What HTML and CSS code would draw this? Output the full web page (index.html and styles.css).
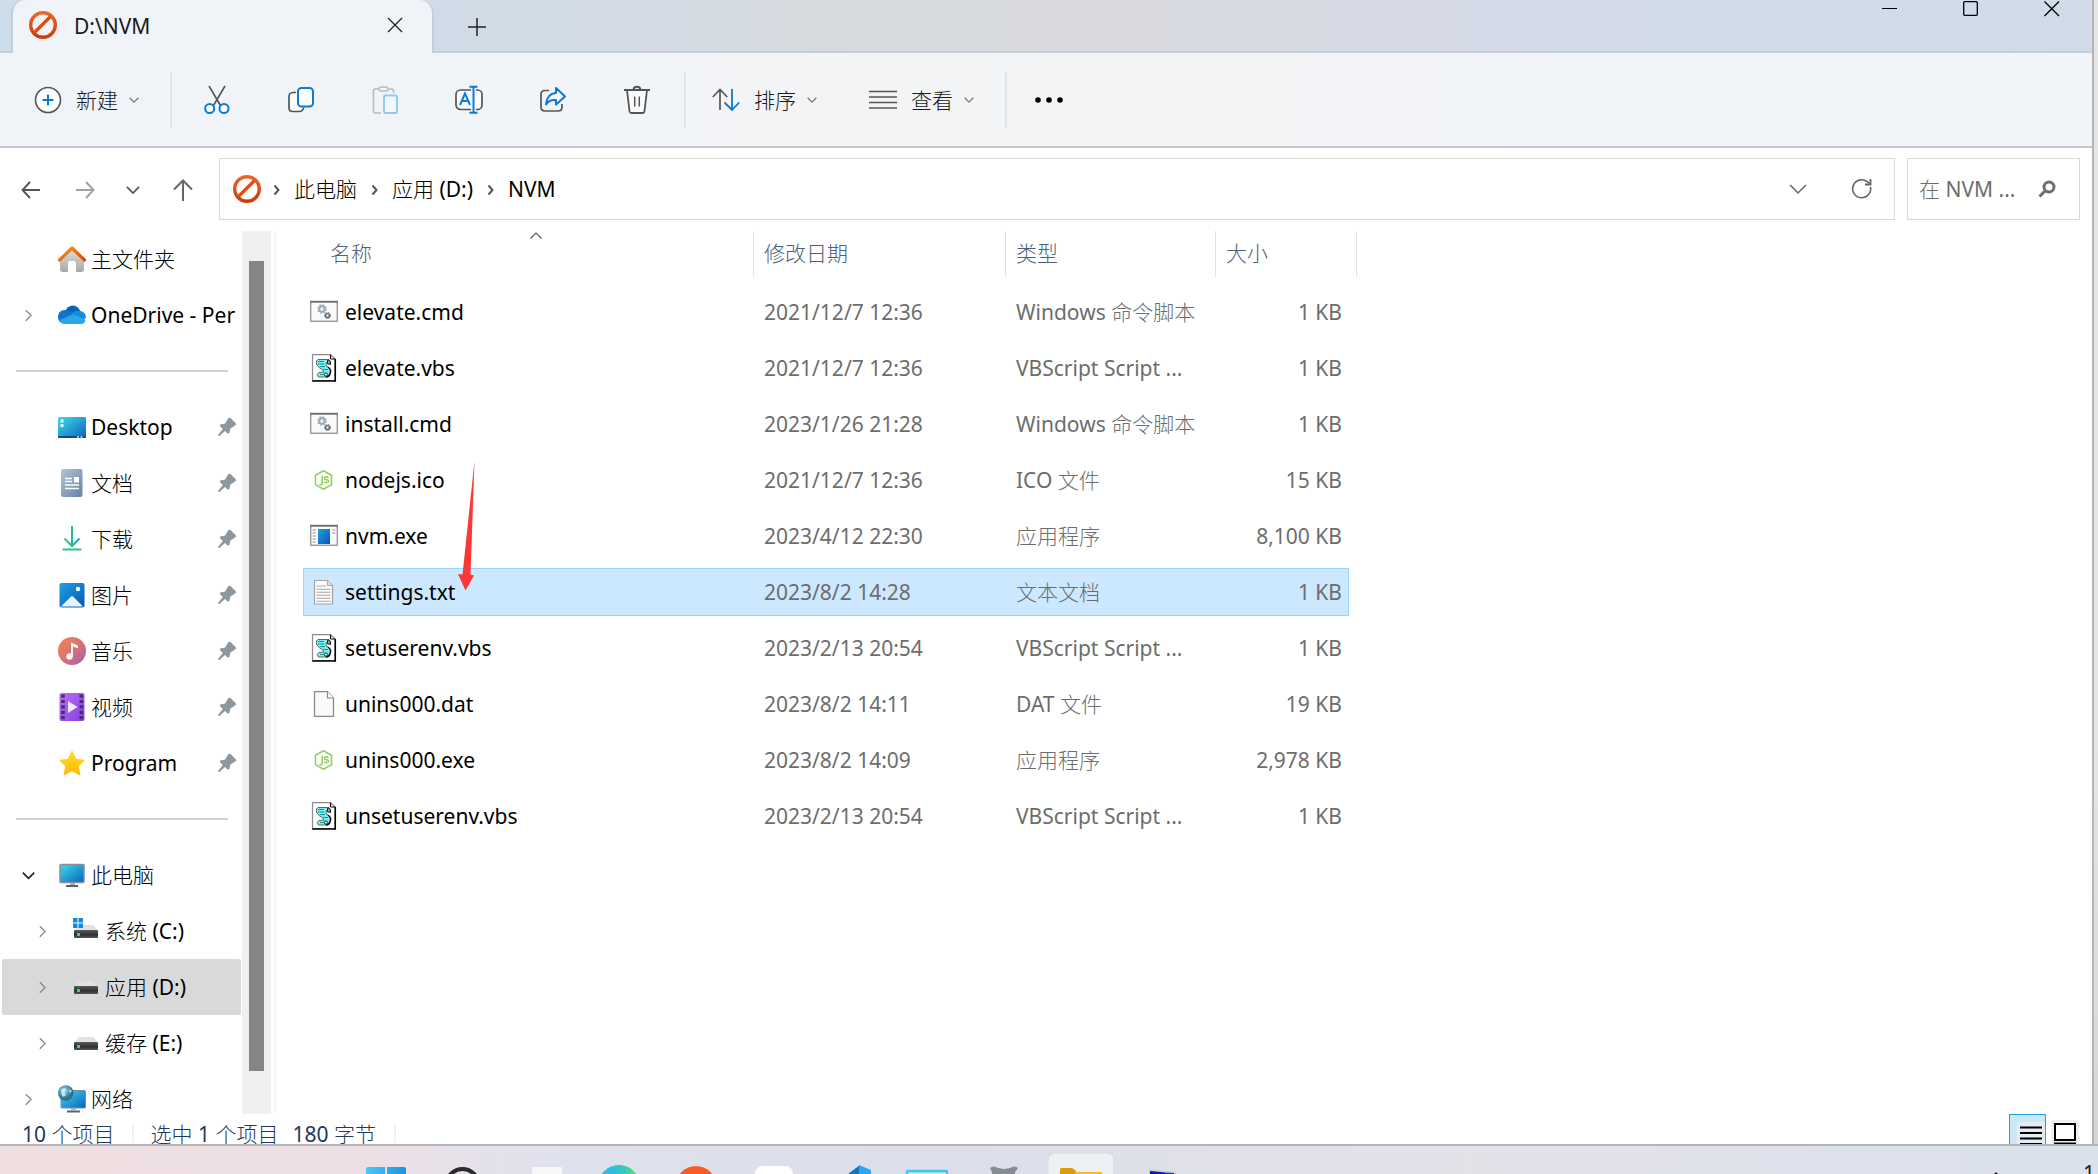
FILE: index.html
```html
<!DOCTYPE html>
<html lang="zh-CN">
<head>
<meta charset="utf-8">
<title>D:\NVM</title>
<link rel="stylesheet" href="styles.css">
</head>
<body>
<svg class="defs" aria-hidden="true">
  <defs>
    <linearGradient id="g-forbid" x1="0" y1="0" x2="0" y2="1"><stop offset="0" stop-color="#e8672c"/><stop offset="1" stop-color="#d23a0a"/></linearGradient>
    <linearGradient id="g-roof" x1="0" y1="0" x2="1" y2="1"><stop offset="0" stop-color="#f79a12"/><stop offset="1" stop-color="#d9480f"/></linearGradient>
    <linearGradient id="g-wall" x1="0" y1="0" x2="0" y2="1"><stop offset="0" stop-color="#dedede"/><stop offset="1" stop-color="#a9a9a9"/></linearGradient>
    <linearGradient id="g-screen" x1="0" y1="0" x2="1" y2="1"><stop offset="0" stop-color="#3fdbe6"/><stop offset="1" stop-color="#0a63c0"/></linearGradient>
    <linearGradient id="g-doc" x1="0" y1="0" x2="1" y2="1"><stop offset="0" stop-color="#b4c5d8"/><stop offset="1" stop-color="#6482a6"/></linearGradient>
    <linearGradient id="g-down" x1="0" y1="0" x2="1" y2="0"><stop offset="0" stop-color="#3cc98e"/><stop offset="1" stop-color="#17a9a9"/></linearGradient>
    <linearGradient id="g-pic" x1="0" y1="0" x2="1" y2="1"><stop offset="0" stop-color="#1fa0ea"/><stop offset="1" stop-color="#0758ac"/></linearGradient>
    <linearGradient id="g-music" x1="0" y1="0" x2="1" y2="1"><stop offset="0" stop-color="#f5894a"/><stop offset=".6" stop-color="#cf6f80"/><stop offset="1" stop-color="#9a5fc4"/></linearGradient>
    <linearGradient id="g-video" x1="0" y1="0" x2="1" y2="1"><stop offset="0" stop-color="#b970f5"/><stop offset="1" stop-color="#8440e4"/></linearGradient>
    <linearGradient id="g-star" x1="0" y1="0" x2="0" y2="1"><stop offset="0" stop-color="#ffe11a"/><stop offset="1" stop-color="#ffb60f"/></linearGradient>
    <linearGradient id="g-drive" x1="0" y1="0" x2="0" y2="1"><stop offset="0" stop-color="#5a5a5a"/><stop offset=".6" stop-color="#303030"/><stop offset="1" stop-color="#555"/></linearGradient>
    <linearGradient id="g-win" x1="0" y1="0" x2="1" y2="0"><stop offset="0" stop-color="#4cc8f8"/><stop offset="1" stop-color="#1b92de"/></linearGradient>
    <linearGradient id="g-edge" x1="0" y1="0" x2="1" y2="0"><stop offset="0" stop-color="#35b5f0"/><stop offset=".5" stop-color="#2cc3d2"/><stop offset="1" stop-color="#5fe068"/></linearGradient>
    <radialGradient id="g-globe" cx=".4" cy=".35"><stop offset="0" stop-color="#c2e6f2"/><stop offset=".5" stop-color="#58a9cb"/><stop offset="1" stop-color="#2f6f92"/></radialGradient>

    <symbol id="forbid" viewBox="0 0 28 28"><circle cx="14" cy="14" r="12.3" fill="none" stroke="url(#g-forbid)" stroke-width="3.4"/><path d="M5.500 21.500 21.500 5.500" stroke="#dc4c16" stroke-width="3.2"/></symbol>
    <symbol id="chev-down" viewBox="0 0 16 16"><path d="M1 4.500 8 11.500 15 4.500" fill="none" stroke="currentColor" stroke-width="var(--sw,2)"/></symbol>
    <symbol id="chev-right" viewBox="0 0 8 14"><path d="M1 1 7 7 1 13" fill="none" stroke="currentColor" stroke-width="1.600"/></symbol>
    <symbol id="crumb" viewBox="0 0 8 12"><path d="M1.500 1.500 5.500 6 1.500 10.500" fill="none" stroke="#555" stroke-width="2"/></symbol>
    <symbol id="pin" viewBox="0 0 20 20"><path d="M11 1.500 Q12.500 0 14 1.500 L18.600 6 Q20 7.500 18 8.500 L13.500 11.500 12.500 15.500 Q11.500 17.500 10 16 L8 14 3 18.500 Q1 19.500 1 18 L5.800 12 3.500 9.800 Q2 8 4 7.200 L8.200 6.500Z" fill="#8d989e"/></symbol>
    <symbol id="drive" viewBox="0 0 28 28"><path d="M7 8H21.500L26 15H2Z" fill="#dfe1e6"/><rect x="2" y="13" width="24" height="8" rx="1" fill="url(#g-drive)"/><rect x="5" y="16" width="3" height="3" fill="#3ddb4a"/></symbol>
    <symbol id="monitor" viewBox="0 0 28 28"><rect x="2" y="3.500" width="24" height="18" rx="1" fill="url(#g-screen)" stroke="#85919b" stroke-width="1.500"/><path d="M12 22h5v2h-5z" fill="#a9b4bc"/><path d="M8 24h12v2H8z" fill="#59636b"/></symbol>

    <symbol id="f-cmd" viewBox="0 0 28 28"><rect x=".7" y="3.700" width="26.600" height="19.600" fill="#fafafa" stroke="#999" stroke-width="1.400"/><path d="M0 3.700H28" stroke="#6d6d6d" stroke-width="1.800"/><circle cx="12" cy="11" r="2.800" fill="#e6eaee" stroke="#9aa6b0" stroke-width="1.800"/><circle cx="12" cy="11" r="4.200" fill="none" stroke="#9aa6b0" stroke-width="1.200" stroke-dasharray="1.800 1.500"/><circle cx="17.500" cy="17.500" r="1.900" fill="#fff" stroke="#5d656b" stroke-width="1.400"/><circle cx="17.500" cy="17.500" r="3" fill="none" stroke="#5d656b" stroke-width="1" stroke-dasharray="1.300 1.050"/></symbol>
    <symbol id="f-vbs" viewBox="0 0 28 28"><path d="M2.500.700H20.500L25 5V26.500H2.500Z" fill="#fff" stroke="#8b8b8b" stroke-width="1.200"/><path d="M25.300 5V27H2.200" fill="none" stroke="#000" stroke-width="1.500"/><path d="M20.500.700V5H25" fill="none" stroke="#000"/><path d="M8 5.500H18Q20 7 16 9.500 15 11 18 13 22 16 20 20 19 23 16 23H8.500Q6 20 9 18.500 L14 18 Q13 15.500 9 13.500 5 10 6.500 7Z" fill="#7df0f0" stroke="#555" stroke-width=".9"/><path d="M8 7.500H14M8 10H14M10 12.500H15M13 15.500H18M10 20.500H15" stroke="#0c9a9a" stroke-width="1.200"/><path d="M18 5.500Q22 7 20.500 10.500L17 9.500Z" fill="#999" stroke="#111"/><path d="M18 13Q22 16 20 20 19 23 16 23" stroke="#111" fill="none" stroke-width="1.500"/><circle cx="16" cy="20.500" r="1.600" fill="#fff" stroke="#111" stroke-width=".9"/></symbol>
    <symbol id="f-node" viewBox="0 0 28 28"><path d="M13.500 4.700 21.500 9.200V18.600L13.500 23.200 5.500 18.600V9.200Z" fill="none" stroke="#93cf63" stroke-width="1.600" stroke-linejoin="round"/><path d="M12.300 10V17.300Q12.300 19.200 9.500 18.400M18.500 11.500Q14.500 10 14.500 12.300 14.500 13.600 16.500 13.800 18.800 14.200 18.500 15.500 17.800 17.400 14.200 16" fill="none" stroke="#93cf63" stroke-width="1.600"/></symbol>
    <symbol id="f-exe" viewBox="0 0 28 28"><rect x=".7" y="3.700" width="26.600" height="19.600" fill="#fafafa" stroke="#999" stroke-width="1.400"/><path d="M0 3.700H28" stroke="#6d6d6d" stroke-width="1.800"/><rect x="8" y="7" width="12" height="15" fill="url(#g-pic)"/><path d="M2.500 8H6M2.500 11H6M2.500 14H6M2.500 17H6M2.500 20H6M22 8H25.500M22 11H25.500" stroke="#9b9b9b" stroke-width="1.200"/></symbol>
    <symbol id="f-txt" viewBox="0 0 28 28"><path d="M4.500 2.500H17.500L22.500 7.500V26H4.500Z" fill="#fbfbfb" stroke="#a3a3a3" stroke-width="1.200"/><path d="M17.500 2.500V7.500H22.500" fill="#ddd" stroke="#aaa"/><path d="M6.500 8H16M6.500 11.200H20.500M6.500 14.200H20.500M6.500 17.200H20.500M6.500 20.200H20.500M6.500 23.200H20.500" stroke="#a9a9a9" stroke-width="1.100"/></symbol>
    <symbol id="f-dat" viewBox="0 0 28 28"><path d="M4.500 1.600H17.500L23.500 8V26.400H4.500Z" fill="#fafafa" stroke="#8a8a8a" stroke-width="1.300"/><path d="M17.500 1.600V8H23.500" fill="#fff" stroke="#8a8a8a" stroke-width="1.200"/></symbol>
  </defs>
</svg>

<div class="desktop">
<main class="window">
  <header class="titlebar">
    <div class="tab">
      <svg class="i28"><use href="#forbid"/></svg>
      <span class="tab-title">D:\NVM</span>
      <button class="tab-close" aria-label="关闭标签页"><svg width="16" height="16" viewBox="0 0 16 16"><path d="M1 1 15 15M15 1 1 15" stroke="#222" stroke-width="1.300"/></svg></button>
    </div>
    <button class="tab-new" aria-label="新标签页"><svg width="18" height="18" viewBox="0 0 18 18"><path d="M9 0V18M0 9H18" stroke="#222" stroke-width="1.500"/></svg></button>
    <div class="captions">
      <button aria-label="最小化"><svg width="16" height="16" viewBox="0 0 16 16"><path d="M0 7.500H15" stroke="#000"/></svg></button>
      <button aria-label="最大化"><svg width="16" height="16" viewBox="0 0 16 16"><rect x=".700" y=".700" width="13.600" height="13.600" rx="1" fill="none" stroke="#000" stroke-width="1.300"/></svg></button>
      <button aria-label="关闭"><svg width="16" height="16" viewBox="0 0 16 16"><path d="M.5.5 15 15M15 .5.5 15" stroke="#000" stroke-width="1.300"/></svg></button>
    </div>
  </header>

  <div class="toolbar">
    <button class="menu-btn"><svg class="i28" viewBox="0 0 28 28"><circle cx="14" cy="14" r="12.500" fill="#fbfcfd" stroke="#555" stroke-width="1.600"/><path d="M14 8.500V19.500M8.500 14H19.500" stroke="#0a7ad8" stroke-width="2"/></svg><span>新建</span><svg class="chev"><use href="#chev-down"/></svg></button>
    <i class="divider"></i>
    <div class="tools">
      <button aria-label="剪切"><svg class="i28" viewBox="0 0 28 28"><path d="M6 0 17.500 19.500M22 0 10.500 19.500" stroke="#555" stroke-width="1.600"/><circle cx="6.700" cy="22.500" r="4.500" fill="#fff" stroke="#0a7ad8" stroke-width="2"/><circle cx="21" cy="22.500" r="4.500" fill="#fff" stroke="#0a7ad8" stroke-width="2"/></svg></button>
      <button aria-label="复制"><svg class="i28" viewBox="0 0 28 28"><path d="M9 6.500H6Q2 7 2 10V22Q2 25.500 6 25.500H12Q16 25.500 16.500 21.500" fill="#fbfcfd" stroke="#555" stroke-width="1.700"/><rect x="11" y="2" width="15" height="18.500" rx="3.500" fill="#fbfcfd" stroke="#0a7ad8" stroke-width="2"/></svg></button>
      <button aria-label="粘贴" disabled><svg class="i28" viewBox="0 0 28 28"><path d="M8 3H4.500Q2.500 3 2.500 5V25Q2.500 27 4.500 27H10M18 3H20.500Q22.500 3 22.500 5V7" fill="none" stroke="#b8babd" stroke-width="1.600"/><rect x="8" y="1" width="9" height="4" rx="2" fill="#f0f4f9" stroke="#b8babd" stroke-width="1.500"/><rect x="13" y="9.500" width="13" height="17.500" rx="1.500" fill="#f3f8fc" stroke="#93c8ec" stroke-width="1.900"/></svg></button>
      <button aria-label="重命名"><svg class="i28" viewBox="0 0 28 28"><rect x="1" y="4" width="26" height="19.500" rx="4.500" fill="#fbfcfd" stroke="#555" stroke-width="1.700"/><path d="M18.500 2V26" stroke="#f0f4f9" stroke-width="5"/><path d="M18.500 0V27M14.500 .800H22.500M14.500 26.800H22.500M5 19 10 7.500 15 19M6.800 15H13.200" fill="none" stroke="#0a7ad8" stroke-width="1.900"/></svg></button>
      <button aria-label="共享"><svg class="i28" viewBox="0 0 28 28"><path d="M10 4.500H6Q2 4.500 2 8.500V21Q2 25 6 25H19Q23 25 23 21V18" fill="none" stroke="#555" stroke-width="1.700"/><path d="M17 2 26 10.500 17 18.500V14Q10 13.500 7 18.500 8 7.500 17 7Z" fill="#fbfcfd" stroke="#0a7ad8" stroke-width="2" stroke-linejoin="round"/></svg></button>
      <button aria-label="删除"><svg class="i28" viewBox="0 0 28 28"><path d="M4 4 6.500 25Q6.700 27 8.500 27H19.500Q21.300 27 21.500 25L24 4" fill="#fbfcfd" stroke="#555" stroke-width="1.800"/><path d="M1 4H27M10.500 3.500Q11 .800 14 .800T17.500 3.500" fill="none" stroke="#555" stroke-width="1.900"/><path d="M11.700 10.500V20.500M16.300 10.500V20.500" stroke="#555" stroke-width="1.500"/></svg></button>
    </div>
    <i class="divider"></i>
    <button class="menu-btn"><svg class="i28" viewBox="0 0 28 28"><path d="M8 24V4M.8 11 8 3.500 15.200 11" fill="none" stroke="#555" stroke-width="1.700"/><path d="M20 3V24M12.500 16.500 20 24 27.200 16.500" fill="none" stroke="#0a7ad8" stroke-width="1.800"/></svg><span>排序</span><svg class="chev"><use href="#chev-down"/></svg></button>
    <button class="menu-btn"><svg class="i28" viewBox="0 0 28 28"><path d="M0 5.500H28M0 11H28M0 16.500H28M0 22H28" stroke="#555" stroke-width="1.700"/></svg><span>查看</span><svg class="chev"><use href="#chev-down"/></svg></button>
    <i class="divider"></i>
    <button class="more" aria-label="更多"><svg class="i28" viewBox="0 0 28 28"><circle cx="3" cy="14" r="2.800"/><circle cx="14" cy="14" r="2.800"/><circle cx="25" cy="14" r="2.800"/></svg></button>
  </div>

  <div class="navbar">
    <div class="nav-buttons">
      <button aria-label="后退"><svg width="20" height="20" viewBox="0 0 20 20"><path d="M19 10H2M9 2 1.500 10 9 18" fill="none" stroke="#555" stroke-width="1.900"/></svg></button>
      <button aria-label="前进"><svg width="20" height="20" viewBox="0 0 20 20"><path d="M1 10H18M11 2 18.500 10 11 18" fill="none" stroke="#a0a0a0" stroke-width="1.900"/></svg></button>
      <button class="narrow" aria-label="最近位置"><svg width="14" height="14"><use href="#chev-down"/></svg></button>
      <button class="wide" aria-label="上移"><svg width="22" height="22" viewBox="0 0 22 22"><path d="M11 22V2M2 10.500 11 1.500 20 10.500" fill="none" stroke="#666" stroke-width="2"/></svg></button>
    </div>
    <nav class="address" aria-label="地址">
      <svg class="i28"><use href="#forbid"/></svg>
      <svg class="crumb"><use href="#crumb"/></svg><a href="#">此电脑</a>
      <svg class="crumb"><use href="#crumb"/></svg><a href="#">应用 (D:)</a>
      <svg class="crumb"><use href="#crumb"/></svg><a href="#">NVM</a>
      <span class="spacer"></span>
      <button class="addr-btn thin" aria-label="历史"><svg width="18" height="18"><use href="#chev-down"/></svg></button>
      <button class="addr-btn" aria-label="刷新"><svg width="20" height="20" viewBox="0 0 20 20"><path d="M18.500 8A9 9 0 1 1 15 2.500L18 5" fill="none" stroke="#666" stroke-width="1.600"/><path d="M18.500 0V5.500H13" fill="none" stroke="#666" stroke-width="1.800"/></svg></button>
    </nav>
    <label class="search"><input type="text" placeholder="在 NVM ..." aria-label="搜索"><svg width="18" height="18" viewBox="0 0 18 18"><circle cx="11" cy="7" r="5" fill="none" stroke="#6d6d6d" stroke-width="3"/><path d="M7.500 10.500 1.500 16.500" stroke="#6d6d6d" stroke-width="3"/></svg></label>
  </div>

  <div class="body">
    <aside class="sidebar">
      <ul class="tree">
        <li><svg class="i28" viewBox="0 0 28 28"><path d="M2 14 14 3.500 26 14V24Q26 27 23 27H18V18Q18 16 16 16H12Q10 16 10 18V27H5Q2 27 2 24Z" fill="url(#g-wall)"/><path d="M1.500 15 14 3 26.500 15" fill="none" stroke="url(#g-roof)" stroke-width="3.200" stroke-linecap="round" stroke-linejoin="round"/></svg><a href="#">主文件夹</a></li>
        <li><svg class="arrow"><use href="#chev-right"/></svg><svg class="i28" viewBox="0 0 28 28"><path d="M7 11Q9 4.500 15 4.500 20 5 22.500 10.500L15 17Z" fill="#0563b5"/><path d="M6 9Q10 8.500 13 11L21 16 10 22H5Q0 21.500 0 16 0 10 6 9Z" fill="#0f74d0"/><path d="M20 9.500Q28 10 28 17L20 20 13 13.500Q16 9.500 20 9.500Z" fill="#1689e0"/><path d="M1.500 19 15 13.500 27.500 18.500Q27 23 22.500 23H6Q3 23 1.500 19Z" fill="#28a8ea"/></svg><a href="#">OneDrive - Per</a></li>
        <li class="rule"><hr></li>
        <li><svg class="i28" viewBox="0 0 28 28"><rect y="4" width="28" height="21" rx="1.500" fill="url(#g-screen)"/><path d="M0 23H28V24Q28 25 27 25H1Q0 25 0 24Z" fill="#0b4f86"/><path d="M2.500 6.500h3v3h-3zM2.500 11h3v3h-3z" fill="#e8ffff"/><path d="M19 24h2M22.500 24h2" stroke="#d0e6f5" stroke-width="1.500"/></svg><a href="#">Desktop</a><svg class="pin"><use href="#pin"/></svg></li>
        <li><svg class="i28" viewBox="0 0 28 28"><rect x="3" width="21.500" height="28" rx="2" fill="url(#g-doc)"/><path d="M7 9.500H14M7 12.500H14M7 16H21M7 19.500H21" stroke="#fff" stroke-width="1.600"/><path d="M16 8h5v5.500h-5z" fill="#fff"/></svg><a href="#">文档</a><svg class="pin"><use href="#pin"/></svg></li>
        <li><svg class="i28" viewBox="0 0 28 28"><path d="M6.500 13.500 14 21 21.500 13.500" fill="none" stroke="url(#g-down)" stroke-width="2"/><path d="M13 1h2v20h-2z" fill="#27b79c"/><path d="M4.500 24.500H23.500" stroke="#35c08e" stroke-width="2.200"/></svg><a href="#">下载</a><svg class="pin"><use href="#pin"/></svg></li>
        <li><svg class="i28" viewBox="0 0 28 28"><rect x="1.500" y="2" width="25" height="24.500" rx="2" fill="url(#g-pic)"/><path d="M3 25.500 13 15.500Q14 14.800 15 15.500L25 25.500Z" fill="#eaf4fd"/><circle cx="20" cy="8" r="2.200" fill="#fff"/></svg><a href="#">图片</a><svg class="pin"><use href="#pin"/></svg></li>
        <li><svg class="i28" viewBox="0 0 28 28"><circle cx="14" cy="14" r="14" fill="url(#g-music)"/><circle cx="11.500" cy="19.500" r="3.200" fill="#f6f6f6"/><path d="M13 5.500 20 8.500V11.500L15 9.500V19.500H13Z" fill="#f6f6f6"/></svg><a href="#">音乐</a><svg class="pin"><use href="#pin"/></svg></li>
        <li><svg class="i28" viewBox="0 0 28 28"><rect x="1.500" width="25" height="28" rx="2" fill="url(#g-video)"/><path d="M5 1.500V28M23.300 1.500V28" stroke="#4a2b7a" stroke-width="3.600" stroke-dasharray="3.200 2.200"/><path d="M10 8 19.500 14 10 20Z" fill="#efe9f8"/></svg><a href="#">视频</a><svg class="pin"><use href="#pin"/></svg></li>
        <li><svg class="i28" viewBox="0 0 28 28"><path d="M14 2 17.800 10.300 26.300 11.300 20.200 17.300 22 26 14 21.700 6 26 7.800 17.300 1.700 11.300 10.200 10.300Z" fill="url(#g-star)" stroke="url(#g-star)" stroke-linejoin="round"/></svg><a href="#">Program</a><svg class="pin"><use href="#pin"/></svg></li>
        <li class="rule"><hr></li>
        <li class="open"><svg class="arrow down"><use href="#chev-down"/></svg><svg class="i28"><use href="#monitor"/></svg><a href="#">此电脑</a></li>
        <li class="sub"><svg class="arrow"><use href="#chev-right"/></svg><svg class="i28" viewBox="0 0 28 28"><use href="#drive"/><path d="M1 1h4.500v4.500H1zM6.500 1H11v4.500H6.500zM1 6.500h4.500V11H1zM6.500 6.500H11V11H6.500z" fill="#128bdc"/></svg><a href="#">系统 (C:)</a></li>
        <li class="sub current"><svg class="arrow"><use href="#chev-right"/></svg><svg class="i28"><use href="#drive"/></svg><a href="#">应用 (D:)</a></li>
        <li class="sub"><svg class="arrow"><use href="#chev-right"/></svg><svg class="i28"><use href="#drive"/></svg><a href="#">缓存 (E:)</a></li>
        <li><svg class="arrow"><use href="#chev-right"/></svg><svg class="i28" viewBox="0 0 28 28"><rect x="3" y="5.500" width="24.500" height="17.500" rx="1" fill="url(#g-screen)" stroke="#6f93a8"/><path d="M13 23h5v2h-5z" fill="#a9b4bc"/><path d="M9 25.500h13v2H9z" fill="#59636b"/><circle cx="7.800" cy="8" r="7.800" fill="url(#g-globe)"/><path d="M3 5Q6 2 8 4L6 7 8 10 5 12Q3 9 3 5ZM11 4 14 6 12 8Z" fill="#e3f2f5" opacity=".8"/></svg><a href="#">网络</a></li>
      </ul>
      <div class="scroll-track"><div class="scroll-thumb"></div></div>
    </aside>

    <section class="files">
      <table>
        <colgroup><col class="c-name"><col class="c-date"><col class="c-type"><col class="c-size"><col class="c-end"></colgroup>
        <thead><tr>
          <th scope="col"><div class="head name-head">名称<svg class="sort" viewBox="0 0 12 7"><path d="M.5 6.500 6 1 11.500 6.500" fill="none" stroke="#555" stroke-width="1.200"/></svg></div></th>
          <th scope="col"><div class="head">修改日期</div></th>
          <th scope="col"><div class="head">类型</div></th>
          <th scope="col" colspan="2"><div class="head">大小</div></th>
        </tr></thead>
        <tbody>
          <tr><td><svg class="i28"><use href="#f-cmd"/></svg>elevate.cmd</td><td>2021/12/7 12:36</td><td>Windows 命令脚本</td><td>1 KB</td></tr>
          <tr><td><svg class="i28"><use href="#f-vbs"/></svg>elevate.vbs</td><td>2021/12/7 12:36</td><td>VBScript Script ...</td><td>1 KB</td></tr>
          <tr><td><svg class="i28"><use href="#f-cmd"/></svg>install.cmd</td><td>2023/1/26 21:28</td><td>Windows 命令脚本</td><td>1 KB</td></tr>
          <tr><td><svg class="i28"><use href="#f-node"/></svg>nodejs.ico</td><td>2021/12/7 12:36</td><td>ICO 文件</td><td>15 KB</td></tr>
          <tr><td><svg class="i28"><use href="#f-exe"/></svg>nvm.exe</td><td>2023/4/12 22:30</td><td>应用程序</td><td>8,100 KB</td></tr>
          <tr class="selected"><td><svg class="i28"><use href="#f-txt"/></svg>settings.txt</td><td>2023/8/2 14:28</td><td>文本文档</td><td>1 KB</td></tr>
          <tr><td><svg class="i28"><use href="#f-vbs"/></svg>setuserenv.vbs</td><td>2023/2/13 20:54</td><td>VBScript Script ...</td><td>1 KB</td></tr>
          <tr><td><svg class="i28"><use href="#f-dat"/></svg>unins000.dat</td><td>2023/8/2 14:11</td><td>DAT 文件</td><td>19 KB</td></tr>
          <tr><td><svg class="i28"><use href="#f-node"/></svg>unins000.exe</td><td>2023/8/2 14:09</td><td>应用程序</td><td>2,978 KB</td></tr>
          <tr><td><svg class="i28"><use href="#f-vbs"/></svg>unsetuserenv.vbs</td><td>2023/2/13 20:54</td><td>VBScript Script ...</td><td>1 KB</td></tr>
        </tbody>
      </table>
      <svg class="pointer" viewBox="0 0 18 130"><path d="M16.500 0 12.500 113.500 16 114.500 7.500 129.500 0 113 4.500 113.500Z" fill="#fb3836"/></svg>
    </section>
  </div>

  <footer class="status">
    <span>10 个项目</span><i></i><span>选中 1 个项目</span><span>180 字节</span><i></i>
    <div class="views">
      <button class="on" aria-label="详细信息"><svg viewBox="0 0 28 28"><rect width="28" height="28" rx="2" fill="#e4ecf4"/><path d="M3 5.500H25M3 11H25M3 16.500H25M3 22H25" stroke="#000" stroke-width="2"/></svg></button>
      <button aria-label="大图标"><svg viewBox="0 0 28 28"><rect width="28" height="28" rx="2" fill="#f1f1f1"/><rect x="4" y="4" width="20" height="16" fill="#fff" stroke="#000" stroke-width="2"/><path d="M3 23.500H25" stroke="#000" stroke-width="2"/></svg></button>
    </div>
  </footer>
</main>
<div class="behind"></div>
</div>

<div class="taskbar">
  <svg class="apps" width="860" height="28" viewBox="350 1146 860 28">
    <path d="M366 1169q0-2 2-2h17v20h-19zM387 1167h17q2 0 2 2v18h-19z" fill="url(#g-win)"/>
    <circle cx="462.500" cy="1185" r="16" fill="none" stroke="#2b2b2b" stroke-width="4"/>
    <path d="M532 1167h30v20h-30z" fill="#f7f7f7"/>
    <circle cx="619" cy="1186" r="21" fill="url(#g-edge)"/>
    <circle cx="696" cy="1186" r="20" fill="#fc5a25"/>
    <rect x="755" y="1166" width="38" height="30" rx="8" fill="#fff"/>
    <path d="M848 1174 860 1165V1180H848Z" fill="#0a79bd"/><path d="M859 1165 871 1170V1180H859Z" fill="#27aaf0"/>
    <rect x="907" y="1171" width="40" height="12" rx="1" fill="#a8ecfb" stroke="#3cc6f0" stroke-width="2.500"/>
    <path d="M992 1176V1172L990 1168Q993 1165 998 1168L1004 1169 1010 1168Q1015 1165 1018 1168L1015 1172V1176Z" fill="#858c94"/>
    <rect x="1048" y="1153" width="66" height="40" rx="7" fill="#eff0f4" stroke="#d6d9e2"/>
    <path d="M1060 1170q0-2 2-2h10l4 4h26v8h-42z" fill="#f8b92c"/><path d="M1060 1170q0-2 2-2h10l4 3-2 3h-14z" fill="#dc9b08"/>
    <path d="M1149 1169 1176 1172V1180H1149Z" fill="#cfd0c4"/><path d="M1150 1171 1165 1172.500V1180H1150Z" fill="#0a12c8"/><path d="M1165 1172.500 1174 1173V1180H1165Z" fill="#283f96"/>
  </svg>
  <svg class="tray" width="10" height="4" viewBox="0 0 10 4"><path d="M1 5 5 1 9 5" fill="none" stroke="#222" stroke-width="1.500"/></svg>
  <span class="clock">1</span>
</div>
</body>
</html>
```
FILE: styles.css
```css
* { box-sizing: border-box; }

body {
  margin: 0;
  height: 100vh;
  overflow: hidden;
  display: flex;
  flex-direction: column;
  font: 21px/28px "Noto Sans", "Noto Sans CJK SC Light", "Noto Sans CJK SC DemiLight", "Noto Sans CJK SC", sans-serif;
  color: #000;
  background: #dfe2ec;
}

.defs { position: absolute; width: 0; height: 0; }
svg { display: block; flex: none; overflow: visible; }
button { border: 0; padding: 0; background: none; font: inherit; color: inherit; display: flex; align-items: center; justify-content: center; }
a { color: inherit; text-decoration: none; white-space: nowrap; }
.i28 { width: 28px; height: 28px; }

.desktop { flex: 1; min-height: 0; display: flex; border-bottom: 2px solid #b4b5b9; }
.window { flex: 1; min-width: 0; display: flex; flex-direction: column; background: #fff; border-right: 2px solid #b5b5b5; }
.behind { width: 4px; background: linear-gradient(#e5e5e5 66%, #d6d6d6); }

/* title bar */
.titlebar {
  flex: none;
  height: 53px;
  display: flex;
  padding-left: 11px;
  border-bottom: 2px solid #c5cedb;
  background: linear-gradient(90deg, #ccdcea, #d2dbe6 28%, #d6dade 40%, #d9dadf 52%, #d3dbea 78%, #d2dbea 92%, #cfdce8 96%, #d1dae8);
}
.tab {
  flex: none;
  width: 423px;
  height: 53px;
  display: flex;
  align-items: center;
  padding: 0 23px 3px 16px;
  border: 2px solid #c2d0de;
  border-top: 0;
  border-bottom: 0;
  border-radius: 14px 14px 0 0;
  background: #f0f4f9;
}
.tab-title { flex: 1; padding: 2px 0 0 17px; color: #191919; }
.tab-close, .tab-new { width: 28px; height: 28px; }
.tab-new { margin: 13px 0 0 29px; }
.captions { display: flex; margin-left: auto; }
.captions button { width: 81px; height: 17px; }

/* command bar */
.toolbar {
  flex: none;
  height: 95px;
  display: flex;
  align-items: center;
  padding-left: 8px;
  border-bottom: 2px solid #c2c9d3;
  background: linear-gradient(90deg, #f0f4f9 20%, #f3f4f6 40%, #f3f4f6 55%, #f1f4f9 82%, #f1f5f9);
}
.menu-btn { height: 56px; padding: 0 26px; color: #191919; }
.menu-btn span { margin: 0 11px 0 14px; }
.menu-btn .chev { width: 10px; height: 10px; color: #777; }
.divider { width: 2px; height: 56px; margin-left: 5px; background: #e2e5e9; }
.tools { display: flex; margin-left: 3px; }
.tools button, .more { width: 84px; height: 56px; }

/* navigation */
.navbar { flex: none; display: flex; padding: 10px 12px 10px 4px; }
.nav-buttons { display: flex; margin-right: 8px; color: #555; }
.nav-buttons button { width: 54px; height: 62px; padding-top: 2px; }
.nav-buttons .narrow { width: 42px; }
.nav-buttons .wide { width: 57px; }
.address { flex: 1; display: flex; align-items: center; height: 62px; padding-left: 13px; border: 1px solid #d9d9d9; }
.address a { padding-right: 2px; }
.crumb { width: 8px; height: 12px; margin: 2px 13px 0 12px; }
.spacer { flex: 1; }
.addr-btn { width: 64px; height: 60px; color: #666; }
.thin { --sw: 1.4; }
.search { display: flex; align-items: center; width: 173px; height: 62px; margin-left: 12px; padding: 0 23px 0 11px; border: 1px solid #d9d9d9; }
.search input { flex: 1; min-width: 0; border: 0; padding: 0; outline: 0; font: inherit; background: none; }
.search input::placeholder { color: #6d6d6d; opacity: 1; }

/* sidebar */
.body { flex: 1; min-height: 0; display: flex; }
.sidebar { flex: none; width: 276px; display: flex; margin-top: 1px; overflow: hidden; border-right: 2px solid #f6f6f6; }
.tree { flex: none; width: 242px; margin: 0; padding: 0; list-style: none; }
.tree li { height: 56px; display: flex; align-items: center; margin: 0 1px 0 2px; padding-left: 56px; border-radius: 2px; overflow: hidden; }
.tree a { margin-left: 5px; }
.tree .arrow { width: 7px; height: 13px; margin: 0 26px 0 -33px; color: #8a8a8a; }
.tree .down { width: 13px; height: 13px; margin: 0 23px 0 -36px; color: #222; }
.tree .sub { padding-left: 70px; }
.tree .current { background: #d9d9d9; }
.tree .rule { padding: 0 13px 0 14px; }
.rule hr { flex: 1; margin: 0; border: 0; height: 2px; background: #d3d3d3; }
.pin { width: 20px; height: 20px; margin: 0 4px 0 auto; }
.scroll-track { width: 29px; padding: 30px 7px 43px; background: #f0f0f0; display: flex; }
.scroll-thumb { width: 15px; background: #858585; }

/* file list */
.files { flex: 1; position: relative; padding-left: 27px; overflow: hidden; }
table { table-layout: fixed; width: 1054px; margin-top: -7px; border-collapse: separate; border-spacing: 0 8px; }
.c-name { width: 451px; }
.c-date { width: 252px; }
.c-type { width: 210px; }
.c-size { width: 133px; }
.c-end { width: 8px; }
th { height: 49px; padding: 0; vertical-align: top; font-weight: 400; text-align: left; color: #4c607a; }
.head { height: 46px; padding: 8px 0 0 10px; border-right: 1px solid #e2e2e2; }
.name-head { position: relative; padding-left: 27px; }
.sort { position: absolute; left: 227px; top: 1px; width: 12px; height: 7px; }
td { height: 48px; padding: 0 8px 0 10px; border: solid transparent; border-width: 1px 0; color: #6d6d6d; white-space: nowrap; }
td:first-child { display: flex; align-items: center; gap: 7px; padding-left: 6px; border-left-width: 1px; color: #000; }
td:nth-child(4) { text-align: right; padding-right: 6px; border-right-width: 1px; }
.selected td { background: #cce8ff; border-color: #99d1ff; }
.pointer { position: absolute; left: 182px; top: 231px; width: 18px; height: 130px; }

/* status bar */
.status { flex: none; height: 30px; display: flex; align-items: flex-start; overflow: hidden; padding: 6px 13px 0 22px; color: #1e395b; }
.status span { margin-right: 14px; white-space: nowrap; }
.status i { width: 2px; height: 18px; margin: 5px 16px 0 4px; background: #f0f0f0; }
.views { display: flex; gap: 5px; margin: -6px 0 0 auto; }
.views button { width: 28px; height: 44px; padding-top: 6px; align-items: flex-start; }
.views svg { width: 28px; height: 28px; }
.views .on { width: 37px; padding: 7px 0 0 6px; border: 1px solid #26a0da; background: #cce8f6; }

/* taskbar */
.taskbar { flex: none; height: 28px; display: flex; overflow: hidden; padding: 0 3px 0 350px; background: linear-gradient(90deg, #f0dfe1, #eddfe4 17%, #dfe2ee 27%, #dcdfea 45%, #e3e2e9 70%, #dae1ed); }
.apps { overflow: hidden; }
.tray { margin: 26px 82px 0 auto; }
.clock { margin-top: 13px; color: #222; }
```
